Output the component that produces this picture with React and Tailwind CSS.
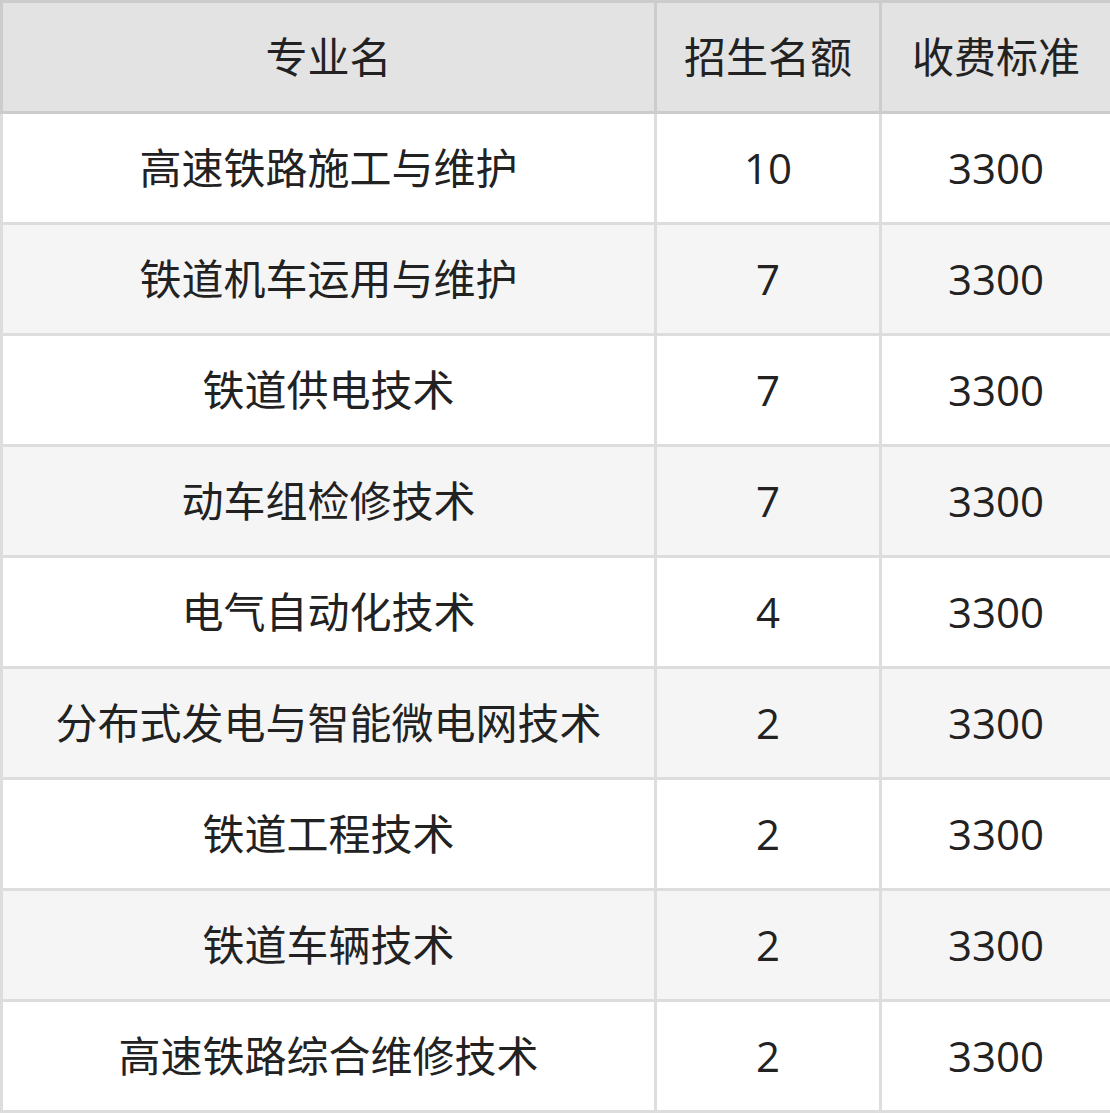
const rows = [
  { name: '高速铁路施工与维护', quota: '10', fee: '3300' },
  { name: '铁道机车运用与维护', quota: '7', fee: '3300' },
  { name: '铁道供电技术', quota: '7', fee: '3300' },
  { name: '动车组检修技术', quota: '7', fee: '3300' },
  { name: '电气自动化技术', quota: '4', fee: '3300' },
  { name: '分布式发电与智能微电网技术', quota: '2', fee: '3300' },
  { name: '铁道工程技术', quota: '2', fee: '3300' },
  { name: '铁道车辆技术', quota: '2', fee: '3300' },
  { name: '高速铁路综合维修技术', quota: '2', fee: '3300' },
];

const App = () => {
  return (
    <div
      className="w-[1110px] bg-white text-[#222]"
      style={{ fontFamily: '"Open Sans", "Noto Sans CJK SC", sans-serif' }}
    >
      <table className="w-[1110px] border-collapse table-fixed text-[42px] leading-none">
        <colgroup>
          <col className="w-[654px]" />
          <col className="w-[225px]" />
          <col className="w-[231px]" />
        </colgroup>
        <thead>
          <tr className="bg-[#e3e3e3]">
            <th className="h-[111px] border-[3px] border-[#cccccc] font-normal text-center">专业名</th>
            <th className="h-[111px] border-[3px] border-[#cccccc] font-normal text-center">招生名额</th>
            <th className="h-[111px] border-[3px] border-[#cccccc] font-normal text-center">收费标准</th>
          </tr>
        </thead>
        <tbody>
          {rows.map((row, i) => (
            <tr key={i} className={i % 2 === 1 ? 'bg-[#f5f5f5]' : 'bg-white'}>
              <td className="h-[111px] border-[3px] border-[#dddddd] text-center">{row.name}</td>
              <td className="h-[111px] border-[3px] border-[#dddddd] text-center">{row.quota}</td>
              <td className="h-[111px] border-[3px] border-[#dddddd] text-center">{row.fee}</td>
            </tr>
          ))}
        </tbody>
      </table>
    </div>
  );
};

export default App;
